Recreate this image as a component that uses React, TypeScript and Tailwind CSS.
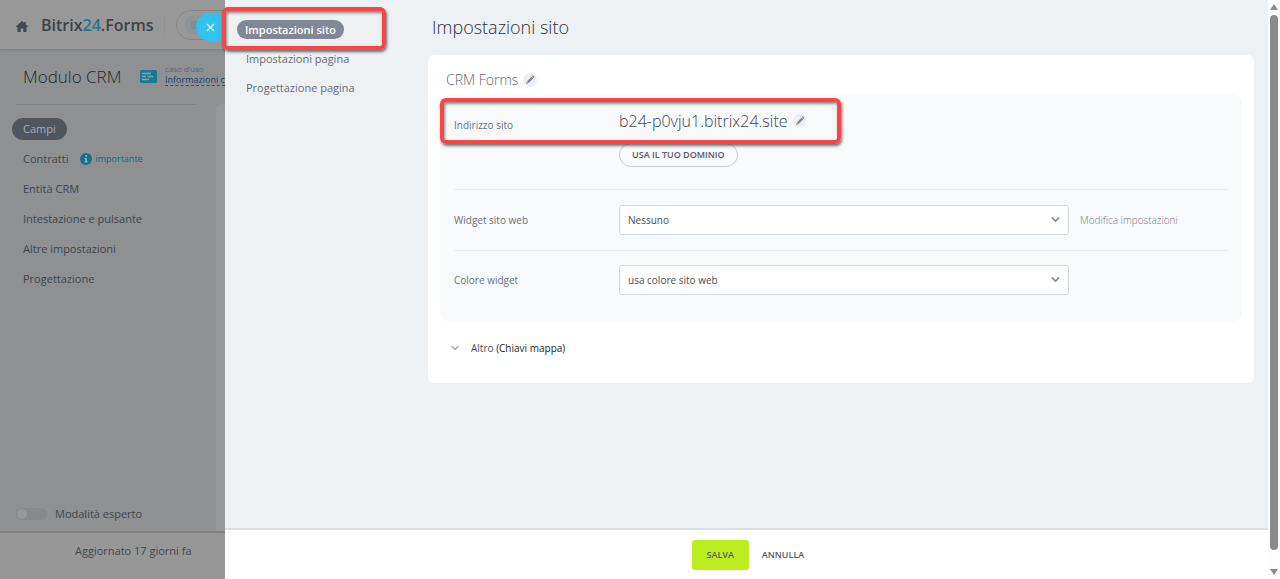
import React from "react";
import { ChevronDown, X } from "lucide-react";

const formMenu = ["Entità CRM", "Intestazione e pulsante", "Altre impostazioni", "Progettazione"];

const EditButton = ({ label }: { label: string }) => (
  <button
    type="button"
    aria-label={label}
    className="flex h-[14px] w-[14px] shrink-0 items-center justify-center rounded-full bg-[#edf0f3]"
  >
    <svg width="10" height="10" viewBox="0 0 10 10" fill="#7f8791">
      <path d="M1 9l.7-2.3 1.6 1.6zM2 6.3l4.5-4.5 1.7 1.7L3.7 8zM6.9 1.4l.6-.6c.3-.3.6-.3.9 0l.8.8c.3.3.3.6 0 .9l-.6.6z" />
    </svg>
  </button>
);

const SelectField = ({ id, value }: { id: string; value: string }) => (
  <div className="relative w-[450px] shrink-0">
    <select
      id={id}
      className="block h-[30px] w-full appearance-none rounded-[3px] border border-[#d3d9dd] bg-white pl-2 pr-8 text-[10px] text-[#484e56]"
    >
      <option>{value}</option>
    </select>
    <ChevronDown
      size={13}
      strokeWidth={3}
      className="pointer-events-none absolute right-[7px] top-2 text-[#848d96]"
    />
  </div>
);

// Red frame that marks a region for the reader
const Highlight = ({ className }: { className: string }) => (
  <div
    className={`pointer-events-none absolute rounded-md border-4 border-[#fa4545] shadow-[1px_2px_3px_rgba(0,0,0,0.55),inset_1px_2px_3px_rgba(0,0,0,0.45)] ${className}`}
  />
);

const FormPage = () => (
  <div className="flex w-[225px] shrink-0 flex-col overflow-hidden bg-[#8e9092] whitespace-nowrap text-[#42474e]">
    <header className="flex h-[49px] shrink-0 items-center bg-[#989898] pl-4 shadow-sm">
      <a href="#" aria-label="Home" className="mr-[13px] mt-1">
        <svg width="12" height="11" viewBox="0 0 12 11" fill="#42484f">
          <path d="M6 0l2.2 2V.9h1.5v2.5L12 5.6v.5h-1.5V11H7.3V7.6H4.7V11H1.5V6.1H0v-.5z" />
        </svg>
      </a>
      <span className="text-base font-semibold text-[#3c4249]">
        Bitrix<span className="text-[#1c7796]">24</span>.Forms
      </span>
      <span className="ml-[11px] h-5 w-px shrink-0 bg-[#909294]" />
      <span className="ml-[11px] flex h-[30px] w-20 shrink-0 items-center rounded-full border border-[#84878a] pl-2">
        <span className="flex h-5 w-5 items-center justify-center rounded-full bg-[#8f9496]">
          <span className="h-2 w-2 bg-[#858b8f]" />
        </span>
      </span>
    </header>

    <div className="flex h-[55px] shrink-0 items-center pl-[23px]">
      <h2 className="w-[117px] shrink-0 text-[17px] font-light text-[#25282c]">Modulo CRM</h2>
      <svg width="17" height="13" viewBox="0 0 17 13" className="shrink-0">
        <rect width="17" height="13" rx="1.5" fill="#167a99" />
        <path d="M2 3.5h9M2 6.5h4M7.5 6.5H13M2 9.5h7" stroke="#8fa2aa" strokeWidth="1.3" />
      </svg>
      <div className="ml-2 mb-1 leading-[11px]">
        <div className="text-[8px] leading-[10px] text-[#63676b]">caso d’uso</div>
        <a href="#" className="block border-b border-dashed border-[#344e76] text-[9px] leading-[11px] text-[#243d65]">
          Informazioni c
        </a>
      </div>
    </div>

    <div className="flex flex-1">
      <div className="flex flex-1 flex-col">
        <div className="ml-4 mr-5 h-px bg-[#7e8184]" />
        <nav className="mt-[13px] flex flex-col items-start gap-2 text-[11px] leading-[22px]">
          <a href="#" className="ml-3 rounded-full bg-[#51565e] px-[11px] text-[#a9acaf]">
            Campi
          </a>
          <div className="ml-[23px] flex items-center">
            <a href="#">Contratti</a>
            <span className="ml-3 flex items-center gap-[3px] text-[9px] text-[#116b8a]">
              <svg width="12" height="12" viewBox="0 0 12 12">
                <circle cx="6" cy="6" r="6" fill="#11718f" />
                <path d="M5.2 2.2h1.9v1.6H5.2zM4.5 4.9h2.4v3.4h.8v1.1H4.4V8.3h.8V6h-.7z" fill="#9fb0b6" />
              </svg>
              importante
            </span>
          </div>
          {formMenu.map((item) => (
            <a href="#" key={item} className="ml-[23px]">
              {item}
            </a>
          ))}
        </nav>
        <label className="mb-[7px] mt-auto flex items-center pl-4 text-[11px] leading-5">
          <input
            type="checkbox"
            className="mr-2 h-3 w-[31px] appearance-none rounded-full bg-[#87898b] before:ml-px before:mt-px before:block before:h-[10px] before:w-[10px] before:rounded-full before:bg-[#989898]"
          />
          Modalità esperto
        </label>
      </div>
      <div className="w-[9px] rounded-tl-md bg-[#989898]" />
    </div>

    <footer className="h-12 shrink-0 border-t-2 border-[#7f8183] bg-[#979797] pl-[75px] pt-2 text-[11px] leading-5">
      Aggiornato 17 giorni fa
    </footer>
  </div>
);

const SettingsPanel = () => (
  <div className="flex min-w-0 flex-1 flex-col bg-[#edf1f4]">
    <div className="flex flex-1">
      <nav className="flex w-[203px] shrink-0 flex-col items-start pl-3 pt-5 text-[11px] leading-[19px] text-[#646b74]">
        <a href="#" className="mb-[10px] rounded-full bg-[#818894] px-2 font-semibold text-white">
          Impostazioni sito
        </a>
        <a href="#" className="mb-[10px] ml-[9px]">
          Impostazioni pagina
        </a>
        <a href="#" className="ml-[9px]">
          Progettazione pagina
        </a>
      </nav>

      <main className="min-w-0 flex-1 pr-[14px]">
        <h1 className="h-[55px] pl-1 pt-[13px] text-lg font-light leading-7 text-[#2c3138]">Impostazioni sito</h1>
        <section className="rounded-md bg-white px-3 pb-[25px]">
          <div className="flex h-10 items-center gap-[5px] pl-[6px] pt-[10px]">
            <h2 className="text-sm font-light text-[#5f646a]">CRM Forms</h2>
            <EditButton label="Modifica nome" />
          </div>

          <div className="rounded-lg bg-[#f8f9fb] px-[14px] pb-[26px] text-[10px] text-[#6a717a]">
            <div className="flex border-b border-[#e9ecef] pb-[22px] pt-4">
              <span className="w-[165px] shrink-0 pt-1 leading-5">Indirizzo sito</span>
              <div>
                <div className="flex items-center gap-[5px] text-base font-light leading-5 text-[#3d4652]">
                  b24-p0vju1.bitrix24.site
                  <EditButton label="Modifica indirizzo" />
                </div>
                <button
                  type="button"
                  className="mt-3 h-6 rounded-full border border-[#c9ced3] px-3 text-[9px] font-semibold text-[#535c69]"
                >
                  USA IL TUO DOMINIO
                </button>
              </div>
            </div>
            <div className="flex items-center border-b border-[#e9ecef] py-[15px]">
              <label htmlFor="widget" className="w-[165px] shrink-0">
                Widget sito web
              </label>
              <SelectField id="widget" value="Nessuno" />
              <a href="#" className="ml-[11px] font-light text-[#717a86]">
                Modifica impostazioni
              </a>
            </div>
            <div className="flex items-center pt-[14px]">
              <label htmlFor="color" className="w-[165px] shrink-0">
                Colore widget
              </label>
              <SelectField id="color" value="usa colore sito web" />
            </div>
          </div>

          <button type="button" className="mt-[17px] flex items-center pl-[9px] text-[10px] font-medium leading-5 text-[#484e55]">
            <ChevronDown size={12} strokeWidth={3} className="mr-[10px] text-[#a5abb1]" />
            <span>
              Altro <span className="text-[#1c1f22]">(Chiavi mappa)</span>
            </span>
          </button>
        </section>
      </main>
    </div>

    <footer className="flex h-[51px] shrink-0 items-center justify-center border-t-2 border-[#dcdfe1] bg-white pl-4 text-[9px] font-semibold text-[#535c69]">
      <button type="submit" className="h-[30px] w-[57px] rounded-[3px] bg-[#bbed21]">
        SALVA
      </button>
      <button type="button" className="h-[30px] px-[13px]">
        ANNULLA
      </button>
    </footer>
  </div>
);

const Scrollbar = () => (
  <div className="flex w-3 shrink-0 flex-col items-center bg-[#fcfcfc]">
    <svg width="8" height="6" viewBox="0 0 8 6" className="mb-[5px] mt-1">
      <path d="M4 0l4 6H0z" fill="#8b8b8b" />
    </svg>
    <div className="w-2 flex-1 rounded-full bg-[#8b8b8b]" />
    <svg width="8" height="6" viewBox="0 0 8 6" className="mb-1 mt-[19px]">
      <path d="M4 6L0 0h8z" fill="#8b8b8b" />
    </svg>
  </div>
);

const App = () => {
  return (
    <div className="relative flex min-h-screen font-['Open_Sans','Noto_Sans',sans-serif]">
      <FormPage />
      <SettingsPanel />
      <Scrollbar />
      <button
        type="button"
        aria-label="Chiudi"
        className="absolute left-[196px] top-[13px] flex h-7 w-[29px] items-center rounded-l-full bg-[#35c1ed] pl-2 text-white"
      >
        <X size={13} strokeWidth={2} />
      </button>
      <Highlight className="left-[222px] top-[7px] h-[43px] w-[164px]" />
      <Highlight className="left-[440px] top-[98px] h-[46px] w-[401px]" />
    </div>
  );
};

export default App;
